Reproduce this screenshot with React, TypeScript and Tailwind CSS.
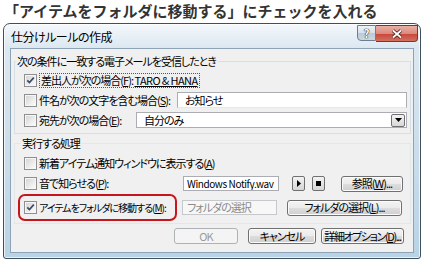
import type { ReactNode } from "react";

function Check({ checked }: { checked?: boolean }) {
    return (
        <span className="flex h-[13px] w-[13px] shrink-0 items-center justify-center border border-[#8f8f8f] bg-white">
            <span className="flex h-[11px] w-[11px] items-center justify-center border border-[#f6f6f6] bg-[linear-gradient(135deg,#d6d6d6,#fbfbfb)]">
                {checked && (
                    <svg width="9" height="9" viewBox="0 0 9 9">
                        <path d="M1.3 4.4 L3.4 6.6 L7.8 1.6" fill="none" stroke="#3b4a6b" strokeWidth="1.7" />
                    </svg>
                )}
            </span>
        </span>
    );
}

function Btn({ children, className, disabled }: { children: ReactNode; className: string; disabled?: boolean }) {
    const look = disabled
        ? "border-[#adb2b5] bg-[#f4f4f4] text-[#9a9a9a]"
        : "border-[#707070] bg-[linear-gradient(#f3f3f3_0%,#ebebeb_50%,#dddddd_51%,#cfcfcf_100%)] text-black shadow-[inset_0_0_0_1px_#fbfbfb]";
    return (
        <div className={`flex h-[16px] shrink-0 items-center justify-center whitespace-nowrap rounded-[3px] border text-[11px] leading-none ${look} ${className}`}>
            {children}
        </div>
    );
}

export default function App() {
    return (
        <div className="h-[264px] w-[429px] overflow-hidden bg-white font-['Noto_Sans_CJK_JP',sans-serif] text-black">
            <h1 className="h-[22px] pl-[4px] pt-[2px] text-[15px] font-bold leading-[18px] text-[#333]">
                「アイテムをフォルダに移動する」にチェックを入れる
            </h1>

            <div className="mx-[3px] mt-[1px] flex h-[236px] w-[418px] flex-col rounded-t-[7px] rounded-b-[3px] border border-[#3f4f5e] bg-[linear-gradient(180deg,#f4f8fb_0%,#dce8f1_10%,#c9dcea_60%,#b8d3e6_100%)] shadow-[inset_0_0_0_1px_rgba(255,255,255,0.7)]">
                <div className="flex h-[24px] items-start justify-between">
                    <span className="pl-[7px] pt-[6px] text-[12px] leading-[14px] tracking-[-0.5px] [font-feature-settings:'palt']">仕分けルールの作成</span>
                    <div className="mr-[2px] mt-[1px] flex">
                        <div className="flex h-[16px] w-[19px] items-center justify-center rounded-bl-[4px] border border-[#6d7d8b] bg-[linear-gradient(#eef3f7_0%,#d5e0ea_50%,#b9c9d6_51%,#cbd8e3_100%)] text-[11px] font-bold leading-none text-white [text-shadow:0_0_1px_#333,0_0_1px_#333,0_0_1px_#333]">
                            ?
                        </div>
                        <div className="flex h-[17px] w-[42px] items-center justify-center rounded-br-[4px] border border-l-0 border-[#6e3a35] bg-[linear-gradient(#eab0a6_0%,#dc8a7d_50%,#c6463a_51%,#d4705f_100%)]">
                            <svg width="12" height="10" viewBox="0 0 12 10">
                                <path d="M2 1.5 L10 8.5 M10 1.5 L2 8.5" stroke="#3a1a16" strokeWidth="3.4" />
                                <path d="M2 1.5 L10 8.5 M10 1.5 L2 8.5" stroke="#fff" strokeWidth="1.8" />
                            </svg>
                        </div>
                    </div>
                </div>

                <div className="mx-[6px] flex h-[205px] flex-col whitespace-nowrap border border-[#8ea3b6] bg-[#f0f0f0] text-[11px] leading-[13px] tracking-[-1px] [font-feature-settings:'palt']">
                    <fieldset className="ml-[3px] mr-[2px] mt-[6px] border border-[#d5dfe5]">
                        <legend className="ml-[1px] pl-[1px] pr-[2px] leading-[12px]">次の条件に一致する電子メールを受信したとき</legend>
                        <div className="mt-[3px] flex flex-col pb-[3px] pl-[9px] pr-[3px]">
                            <div className="flex h-[20px] items-center">
                                <Check checked />
                                <span className="ml-[2px] border border-dotted border-[#555] px-[1px]">
                                    差出人が次の場合(<u>F</u>): <u className="tracking-[-0.6px]">TARO &amp; HANA</u>
                                </span>
                            </div>
                            <div className="flex h-[20px] items-center">
                                <Check />
                                <span className="ml-[2px]">件名が次の文字を含む場合(<u>S</u>):</span>
                                <div className="ml-auto flex h-[16px] w-[230px] items-center border border-[#abadb3] border-b-[#e3e9ef] bg-white pl-[7px]">
                                    お知らせ
                                </div>
                            </div>
                            <div className="flex h-[20px] items-center">
                                <Check />
                                <span className="ml-[2px]">宛先が次の場合(<u>E</u>):</span>
                                <div className="ml-auto flex h-[16px] w-[271px] items-center border border-[#abadb3] bg-white pl-[7px]">
                                    <span>自分のみ</span>
                                    <div className="ml-auto mr-[1px] flex h-[13px] w-[14px] items-center justify-center rounded-[2px] border border-[#707070] bg-[linear-gradient(#f3f3f3,#d8d8d8)]">
                                        <svg width="7" height="4" viewBox="0 0 7 4">
                                            <path d="M0 0 H7 L3.5 4 Z" fill="#000" />
                                        </svg>
                                    </div>
                                </div>
                            </div>
                        </div>
                    </fieldset>

                    <fieldset className="ml-[3px] mr-[2px] mt-[3px] border border-[#e1e8ec]">
                        <legend className="ml-[6px] pl-[1px] pr-[2px] leading-[12px]">実行する処理</legend>
                        <div className="mt-[4px] flex flex-col pb-[2px] pl-[9px]">
                            <div className="flex h-[20px] items-center">
                                <Check />
                                <span className="ml-[2px]">新着アイテム通知ウィンドウに表示する(<u>A</u>)</span>
                            </div>
                            <div className="flex h-[21px] items-center">
                                <div className="flex w-[159px] items-center">
                                    <Check />
                                    <span className="ml-[2px]">音で知らせる(<u>P</u>):</span>
                                </div>
                                <div className="flex h-[15px] w-[96px] items-center overflow-hidden border border-[#abadb3] bg-white pl-[3px] text-[10px] tracking-[-0.4px]">
                                    Windows Notify.wav
                                </div>
                                <div className="ml-[13px] flex h-[15px] w-[13px] items-center justify-center rounded-[2px] border border-[#707070] bg-[linear-gradient(#f3f3f3,#d6d6d6)]">
                                    <svg width="4" height="7" viewBox="0 0 4 7">
                                        <path d="M0 0 L4 3.5 L0 7 Z" fill="#000" />
                                    </svg>
                                </div>
                                <div className="ml-[7px] flex h-[15px] w-[13px] items-center justify-center rounded-[2px] border border-[#707070] bg-[linear-gradient(#f3f3f3,#d6d6d6)]">
                                    <div className="h-[5px] w-[5px] bg-black" />
                                </div>
                                <Btn className="ml-[16px] w-[62px]">
                                    参照(<u>W</u>)...
                                </Btn>
                            </div>
                            <div className="flex h-[27px] items-center">
                                <div className="-ml-[6px] flex h-[27px] w-[159px] items-center rounded-[7px] border-2 border-[#c4161c] pl-[4px]">
                                    <Check checked />
                                    <span className="ml-[2px] text-[10px] tracking-[-1px]">アイテムをフォルダに移動する(<u>M</u>):</span>
                                </div>
                                <div className="ml-[5px] flex h-[15px] w-[95px] items-center border border-[#c5c8cc] bg-[#f7f7f7] pl-[4px] text-[#8a8a8a]">
                                    フォルダの選択
                                </div>
                                <Btn className="ml-[10px] w-[115px]">
                                    フォルダの選択(<u>L</u>)...
                                </Btn>
                            </div>
                        </div>
                    </fieldset>

                    <div className="mt-[4px] flex justify-end pr-[9px]">
                        <Btn disabled className="w-[64px]">
                            OK
                        </Btn>
                        <Btn className="ml-[10px] w-[68px]">キャンセル</Btn>
                        <Btn className="ml-[5px] w-[83px] tracking-[-1.4px]">
                            詳細オプション(<u>D</u>)...
                        </Btn>
                    </div>
                </div>
            </div>
        </div>
    );
}
